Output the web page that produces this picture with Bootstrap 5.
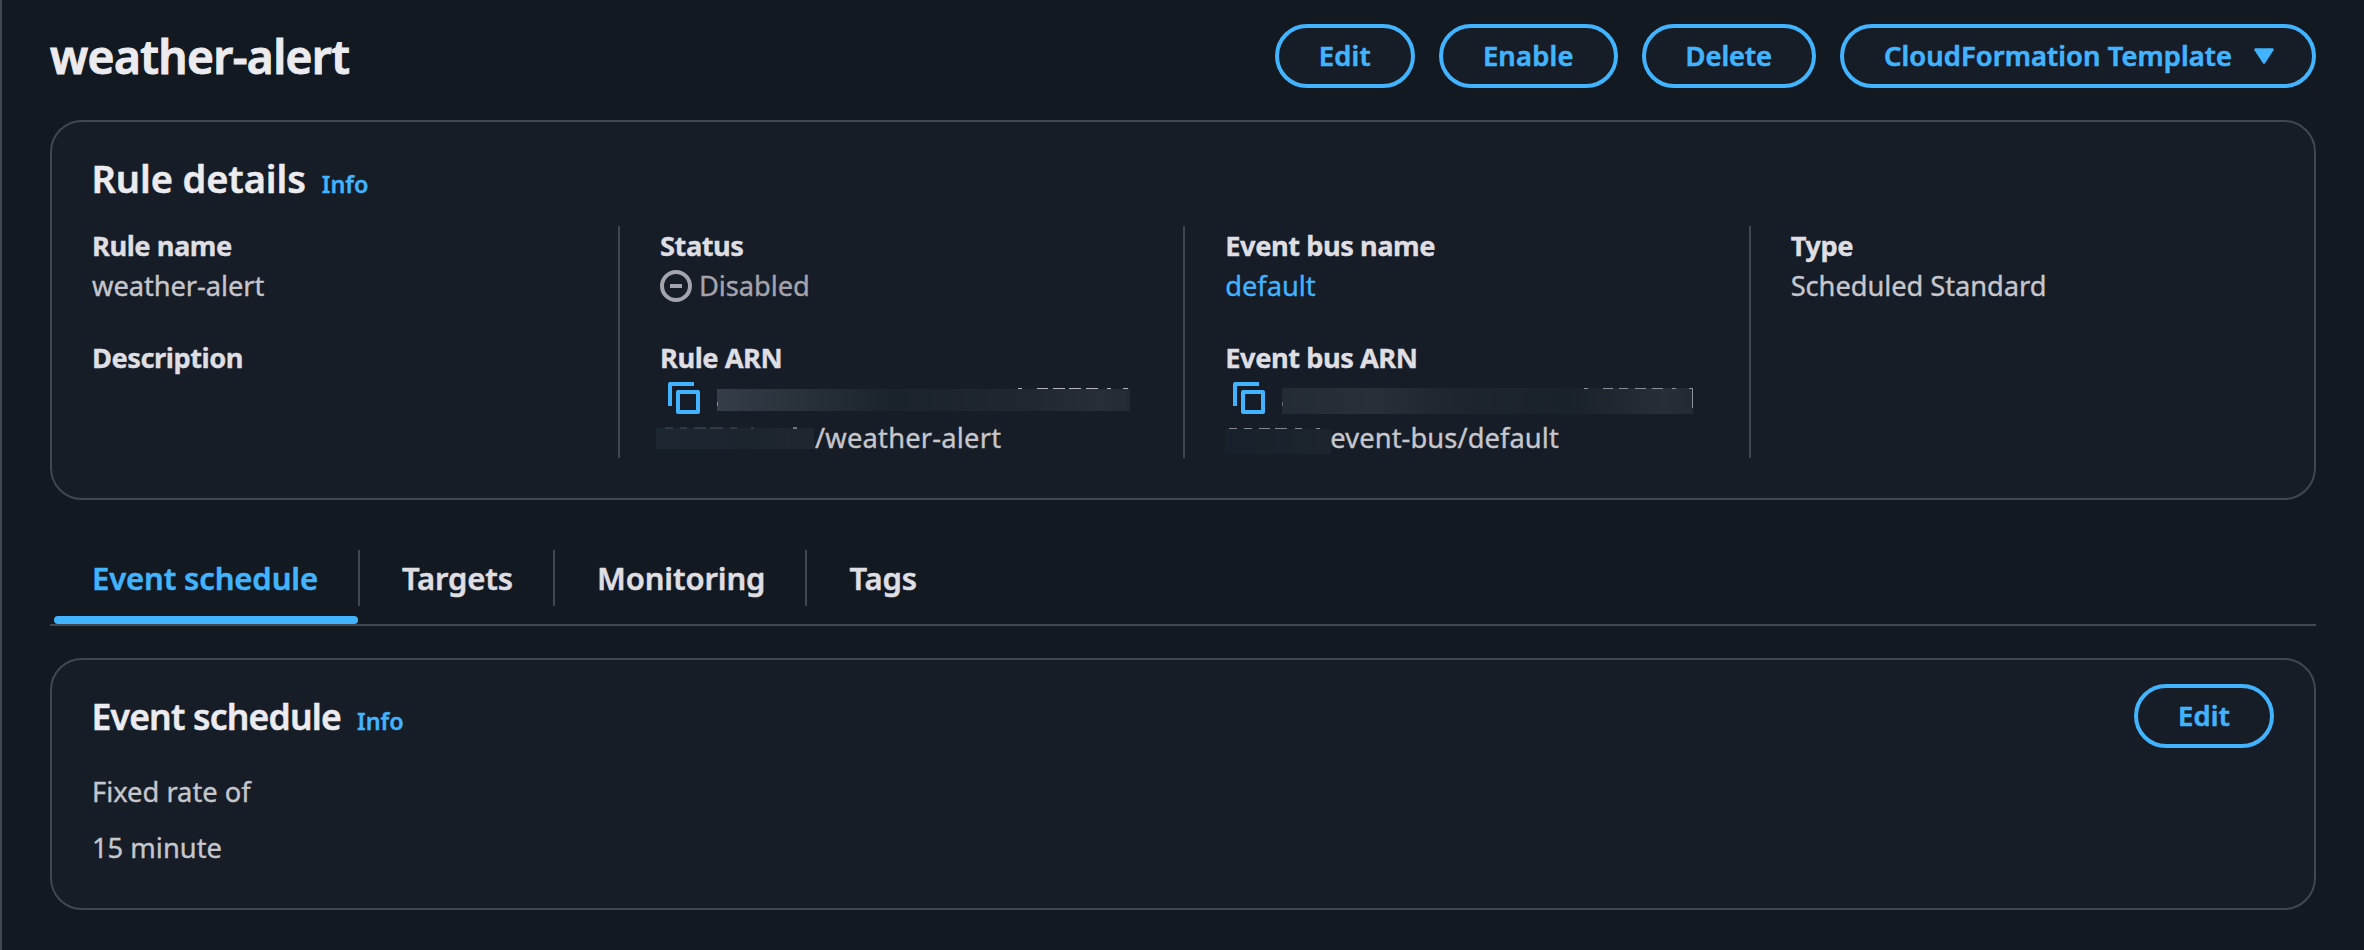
<!DOCTYPE html>
<html lang="en" data-bs-theme="dark">
<head>
<meta charset="utf-8">
<meta name="viewport" content="width=device-width, initial-scale=1">
<title>weather-alert</title>
<link href="https://cdn.jsdelivr.net/npm/bootstrap@5.3.0/dist/css/bootstrap.min.css" rel="stylesheet">
<style>
  :root { --line: #424650; --accent: #42b4ff; --panel: #161d26; }
  body {
    font-family: "Noto Sans", sans-serif; font-size: 27.3px; line-height: 40px;
    color: #c6c6cd; background: #131920; -webkit-text-stroke: .35px currentColor;
  }
  a { color: var(--accent); text-decoration: none; }
  .page { min-height: 950px; border-left: 2px solid var(--line); padding: 24px 48px 40px; }
  .page-title { font-size: 46px; line-height: 56px; font-weight: 600; letter-spacing: -.6px; color: #ebebf0; -webkit-text-stroke-width: 1px; }
  .page-actions { gap: 24px; }
  .btn-pill {
    --bs-btn-color: var(--accent); --bs-btn-bg: var(--panel);
    --bs-btn-border-color: var(--accent); --bs-btn-border-width: 4px;
    --bs-btn-border-radius: 32px; --bs-btn-padding-x: 40px; --bs-btn-padding-y: 8px;
    --bs-btn-font-size: 27.3px; --bs-btn-line-height: 40px; --bs-btn-font-weight: 600;
    --bs-btn-hover-color: #75cfff; --bs-btn-hover-border-color: #75cfff; --bs-btn-hover-bg: #1d2836;
    height: 64px; letter-spacing: .22px; -webkit-text-stroke-width: .6px;
  }
  .btn-delete { letter-spacing: -.05px; }
  .btn-menu { width: 476px; letter-spacing: .1px; }
  .panel { --bs-card-bg: var(--panel); --bs-card-border-color: var(--line); --bs-card-border-width: 2px; --bs-card-border-radius: 32px; --bs-card-color: #c6c6cd; }
  .panel-title { font-size: 38px; line-height: 48px; font-weight: 600; color: #ebebf0; letter-spacing: -.1px; text-indent: -.5px; -webkit-text-stroke-width: .5px; }
  .panel-title.compact { font-size: 35.5px; letter-spacing: -.8px; }
  .info-link { font-size: 23.4px; font-weight: 600; line-height: 32px; }
  .details { display: grid; grid-template-columns: 526px repeat(3, minmax(0, 1fr)); letter-spacing: -.07px; }
  .details-col + .details-col { border-left: 2px solid var(--line); padding-left: 40px; }
  .details-col dl { display: grid; gap: 32px; margin: 0; }
  .details dt { font-weight: 700; color: #dedee3; letter-spacing: -.5px; }
  .details dd { margin: 0; min-height: 40px; }
  .details svg { display: block; flex: none; }
  .status { color: #a4a4ad; gap: 7px; }
  .copy { margin: 0 17px 0 8px; }
  .tabs { margin-top: 50px; height: 76px; border-bottom: 2px solid var(--line); }
  .tabs .nav-item { position: relative; height: 74px; }
  .tabs .nav-link {
    height: 56px; padding: 8px 40px 8px 42px; font-size: 31px; line-height: 40px; font-weight: 600;
    letter-spacing: -.12px; color: #dedee3; border-radius: 0; -webkit-text-stroke-width: .5px;
  }
  .tabs .nav-item:not(:last-child) .nav-link { border-right: 2px solid var(--line); }
  .tabs .nav-link.active { color: var(--accent); }
  .tabs .nav-item.current::after {
    content: ""; position: absolute; left: 4px; right: 2px; bottom: 0; height: 8px;
    border-radius: 4px; background: var(--accent);
  }
</style>
</head>
<body>
<svg width="0" height="0" class="position-absolute" aria-hidden="true">
  <defs>
    <linearGradient id="veilA"><stop offset="0" stop-color="#343e49"/><stop offset=".2" stop-color="#29313a"/><stop offset=".42" stop-color="#1a222b"/><stop offset=".75" stop-color="#20272f"/><stop offset=".93" stop-color="#282e36"/><stop offset="1" stop-color="#232a32"/></linearGradient>
    <linearGradient id="veilB"><stop offset="0" stop-color="#1c2732"/><stop offset=".6" stop-color="#1c252e"/><stop offset="1" stop-color="#20262f"/></linearGradient>
    <linearGradient id="veilC"><stop offset="0" stop-color="#232b34"/><stop offset=".22" stop-color="#292f37"/><stop offset=".42" stop-color="#1e252e"/><stop offset=".7" stop-color="#19212a"/><stop offset=".93" stop-color="#282e35"/><stop offset="1" stop-color="#222930"/></linearGradient>
    <linearGradient id="veilD"><stop offset="0" stop-color="#16212b"/><stop offset="1" stop-color="#1d242d"/></linearGradient>
    <symbol id="copy" viewBox="0 0 32 32"><path d="M2 24V2h24M10 10h20v20H10z" fill="none" stroke="#42b4ff" stroke-width="4" stroke-linejoin="round"/></symbol>
  </defs>
</svg>

<div class="page">
  <header class="d-flex align-items-center justify-content-between">
    <h1 class="page-title mb-0">weather-alert</h1>
    <div class="page-actions d-flex">
      <button type="button" class="btn btn-pill">Edit</button>
      <button type="button" class="btn btn-pill">Enable</button>
      <button type="button" class="btn btn-pill btn-delete">Delete</button>
      <button type="button" class="btn btn-pill btn-menu d-flex align-items-center justify-content-between">
        CloudFormation Template
        <svg width="20" height="16" viewBox="0 0 20 16" style="margin-right:-2px" aria-hidden="true"><path d="M1.5 1.5h17L10 14.5z" fill="#42b4ff" stroke="#42b4ff" stroke-width="2.5" stroke-linejoin="round"/></svg>
      </button>
    </div>
  </header>

  <section class="card panel" style="margin-top:32px">
    <div class="card-body" style="padding:32px 0 40px 40px">
      <div class="d-flex align-items-baseline mb-4">
        <h2 class="panel-title mb-0">Rule details</h2>
        <a href="#" class="info-link ms-3">Info</a>
      </div>
      <div class="details">
        <div class="details-col">
          <dl>
            <div><dt>Rule name</dt><dd>weather-alert</dd></div>
            <div><dt>Description</dt><dd></dd></div>
          </dl>
        </div>
        <div class="details-col">
          <dl>
            <div>
              <dt>Status</dt>
              <dd class="status d-flex align-items-center">
                <svg width="32" height="32" viewBox="0 0 32 32" fill="none" stroke="#a4a4ad" stroke-width="4" aria-hidden="true"><circle cx="16" cy="16" r="14"/><path d="M10 16h12"/></svg>
                <span>Disabled</span>
              </dd>
            </div>
            <div>
              <dt>Rule ARN</dt>
              <dd>
                <div class="d-flex align-items-center">
                  <svg class="copy" width="32" height="32"><use href="#copy"/></svg>
                  <svg width="413" height="40" viewBox="0 0 413 40" aria-hidden="true">
                    <rect y="11" width="413" height="22" fill="url(#veilA)"/>
                    <path d="M301 10.5h4M320 10.5h11M336 10.5h12M352 10.5h12M369 10.5h12M390 10.5h4M406 10.5h5" stroke="#b4b4bc"/>
                    <path d="M.5 24v4" stroke="#8b9098"/>
                  </svg>
                </div>
                <div class="d-flex">
                  <svg width="159" height="40" viewBox="0 0 159 40" style="margin-left:-4px" aria-hidden="true">
                    <rect y="10" width="158" height="21" fill="url(#veilB)"/>
                    <path d="M9 10h8M24 10h7M38 10h12M54 10h13M74 10h7M95 10h3" stroke="#4b525b"/>
                    <path d="M137 10h4" stroke="#c6c6cd"/>
                  </svg>
                  <span style="letter-spacing:.2px">/weather-alert</span>
                </div>
              </dd>
            </div>
          </dl>
        </div>
        <div class="details-col">
          <dl>
            <div><dt>Event bus name</dt><dd><a href="#">default</a></dd></div>
            <div>
              <dt>Event bus ARN</dt>
              <dd>
                <div class="d-flex align-items-center">
                  <svg class="copy" width="32" height="32"><use href="#copy"/></svg>
                  <svg width="412" height="40" viewBox="0 0 412 40" aria-hidden="true">
                    <rect y="10" width="411" height="26" fill="url(#veilC)"/>
                    <path d="M302 10.5h4M321 10.5h10M337 10.5h9M353 10.5h11M370 10.5h11M390 10.5h4M407 10.5h4" stroke="#8b8f96"/>
                    <path d="M410.5 10v20" stroke="#8b8f96"/>
                    <path d="M.5 24v4" stroke="#666c75"/>
                  </svg>
                </div>
                <div class="d-flex">
                  <svg width="106" height="40" viewBox="0 0 106 40" style="margin-right:-1px" aria-hidden="true">
                    <rect y="11" width="106" height="25" fill="url(#veilD)"/>
                    <path d="M4 10.5h8M19 10.5h8M34 10.5h11M50 10.5h12M70 10.5h7M91 10.5h4" stroke="#85888f"/>
                  </svg>
                  <span style="letter-spacing:.08px">event-bus/default</span>
                </div>
              </dd>
            </div>
          </dl>
        </div>
        <div class="details-col">
          <dl><div><dt>Type</dt><dd>Scheduled Standard</dd></div></dl>
        </div>
      </div>
    </div>
  </section>

  <ul class="nav tabs">
    <li class="nav-item current"><a class="nav-link active" href="#">Event schedule</a></li>
    <li class="nav-item"><a class="nav-link" href="#">Targets</a></li>
    <li class="nav-item"><a class="nav-link" href="#">Monitoring</a></li>
    <li class="nav-item"><a class="nav-link" href="#">Tags</a></li>
  </ul>

  <section class="card panel" style="margin-top:32px">
    <div class="card-body" style="padding:24px 40px 40px">
      <div class="d-flex align-items-center justify-content-between mb-4">
        <div class="d-flex align-items-baseline">
          <h2 class="panel-title compact mb-0">Event schedule</h2>
          <a href="#" class="info-link ms-3">Info</a>
        </div>
        <button type="button" class="btn btn-pill">Edit</button>
      </div>
      <p class="mb-3">Fixed rate of</p>
      <p class="mb-0">15 minute</p>
    </div>
  </section>
</div>
<script src="https://cdn.jsdelivr.net/npm/bootstrap@5.3.0/dist/js/bootstrap.bundle.min.js"></script>
</body>
</html>
